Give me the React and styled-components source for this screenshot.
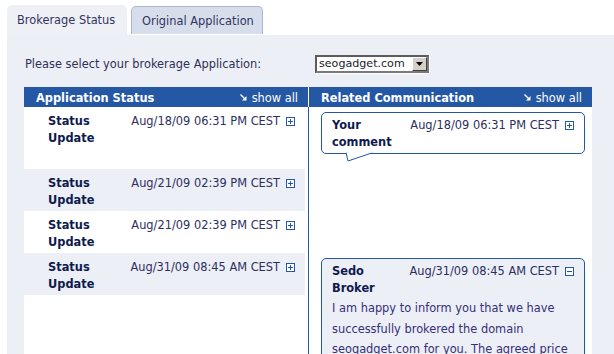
import React from "react";
import styled, { createGlobalStyle } from "styled-components";

const Global = createGlobalStyle`
  html, body { margin: 0; padding: 0; background: #ffffff; }
  body { font-family: "DejaVu Sans", Verdana, sans-serif; font-size: 11.4px; color: #2b2b5b; }
`;

const Page = styled.div`
  width: 614px;
  height: 354px;
  overflow: hidden;
  padding-top: 5px;
  box-sizing: border-box;
  white-space: nowrap;
`;

const Tabs = styled.div`
  display: flex;
  align-items: flex-end;
  gap: 4px;
  padding-left: 7px;
  height: 30px;
`;

const Tab = styled.div`
  box-sizing: border-box;
  display: flex;
  align-items: center;
  height: ${(p) => (p.$active ? "30px" : "28px")};
  margin-bottom: ${(p) => (p.$active ? "0" : "1px")};
  padding: 0 10px;
  width: ${(p) => p.$w}px;
  border-radius: 5px 5px 0 0;
  background: ${(p) => (p.$active ? "#eef0f5" : "#d6deec")};
  border: ${(p) => (p.$active ? "none" : "1px solid #a9b7d3")};
  border-bottom: none;
  color: #33335f;
`;

const Panel = styled.div`
  margin-left: 7px;
  background: #eceff5;
  height: 324px;
  padding: 20px 0 0 17px;
  box-sizing: border-box;
`;

const FormRow = styled.div`
  display: flex;
  align-items: center;
  height: 18px;
`;

const Label = styled.span`
  width: 290px;
  margin-left: 1px;
  color: #303058;
`;

const Select = styled.div`
  box-sizing: border-box;
  width: 114px;
  height: 18px;
  display: flex;
  align-items: center;
  background: #fff;
  border: 2px solid #5c5c5c;
  border-right-color: #7a7a7a;
  border-bottom-color: #7a7a7a;
  box-shadow: 1px 1px 0 #ffffff;
`;

const SelectText = styled.span`
  flex: 1;
  padding-left: 2px;
  font-size: 11.1px;
  color: #1a1a2a;
  line-height: 14px;
`;

const SelectButton = styled.span`
  box-sizing: border-box;
  width: 15px;
  height: 14px;
  background: #d4d0c8;
  border: 1px solid;
  border-color: #ffffff #404040 #404040 #ffffff;
  display: flex;
  align-items: center;
  justify-content: center;
`;

const Columns = styled.div`
  margin-top: 14px;
  width: 568px;
`;

const HeaderRow = styled.div`
  display: flex;
  height: 20px;
`;

const Header = styled.div`
  box-sizing: border-box;
  width: ${(p) => p.$w}px;
  background: #2457a4;
  border-right: ${(p) => (p.$gap ? "1px solid #ffffff" : "none")};
  display: flex;
  align-items: center;
  justify-content: space-between;
  padding: 1px 10px 0 12px;
  color: #ffffff;
`;

const HeaderTitle = styled.span`
  font-weight: bold;
`;

const ShowAll = styled.span`
  display: flex;
  align-items: center;
  gap: 5px;
`;

const Row = styled.div`
  display: flex;
`;

const LeftCell = styled.div`
  box-sizing: border-box;
  width: 285px;
  background: #ffffff;
  border-right: 1px solid #2457a4;
  padding-right: 3px;
`;

const RightCell = styled.div`
  flex: 1;
  background: #ffffff;
  padding: 5px 6px 0 12px;
`;

const Entry = styled.div`
  display: flex;
  align-items: flex-start;
  background: ${(p) => (p.$alt ? "#eceff5" : "#ffffff")};
  padding: 6px 10px 2px 24px;
  box-sizing: border-box;
  line-height: 17px;
`;

const Title = styled.div`
  width: ${(p) => p.$w || 60}px;
  font-weight: bold;
  color: #0f1a4e;
  white-space: normal;
`;

const Stamp = styled.div`
  flex: 1;
  display: flex;
  justify-content: flex-end;
  align-items: center;
  gap: 6px;
  color: #2e2e60;
  height: 17px;
`;

const Bubble = styled.div`
  position: relative;
  box-sizing: border-box;
  width: 264px;
  border: 1px solid #2457a4;
  border-radius: 5px;
  background: ${(p) => (p.$alt ? "#eceff5" : "#ffffff")};
  padding: 4px 10px 2px 10px;
  margin-bottom: ${(p) => p.$mb || 0}px;
  line-height: 17px;
`;

const BubbleHead = styled.div`
  display: flex;
  align-items: flex-start;
`;

const Tail = styled.svg`
  position: absolute;
  left: 24px;
  bottom: -9px;
`;

const Body = styled.div`
  line-height: 20.5px;
  color: #36307a;
  margin-top: 1px;
  white-space: normal;
`;

const Arrow = () => (
  <svg width="7" height="7" viewBox="0 0 7 7">
    <path d="M0.5 0.5 L5.5 5.5" stroke="#fff" strokeWidth="1.4" />
    <path d="M6.5 2 L6.5 6.5 L2 6.5 Z" fill="#fff" />
  </svg>
);

const Toggle = ({ open }) => (
  <svg width="9" height="9" viewBox="0 0 9 9" style={{ flex: "none" }}>
    <rect x="0.5" y="0.5" width="8" height="8" fill="#fff" stroke="#2457a4" />
    <path d="M2 4.5 H7" stroke="#2457a4" />
    {!open && <path d="M4.5 2 V7" stroke="#2457a4" />}
  </svg>
);

const statuses = [
  { date: "Aug/18/09 06:31 PM CEST", alt: false },
  { date: "Aug/21/09 02:39 PM CEST", alt: true },
  { date: "Aug/21/09 02:39 PM CEST", alt: false },
  { date: "Aug/31/09 08:45 AM CEST", alt: true },
];

const StatusEntry = ({ s }) => (
  <Entry $alt={s.alt}>
    <Title $w={70}>Status Update</Title>
    <Stamp>
      <span>{s.date}</span>
      <Toggle />
    </Stamp>
  </Entry>
);

export default function App() {
  return (
    <Page>
      <Global />
      <Tabs>
        <Tab $active $w={120}>Brokerage Status</Tab>
        <Tab $w={132}>Original Application</Tab>
      </Tabs>
      <Panel>
        <FormRow>
          <Label>Please select your brokerage Application:</Label>
          <Select>
            <SelectText>seogadget.com</SelectText>
            <SelectButton>
              <svg width="7" height="4" viewBox="0 0 7 4">
                <path d="M0 0 H7 L3.5 4 Z" fill="#000" />
              </svg>
            </SelectButton>
          </Select>
        </FormRow>
        <Columns>
          <HeaderRow>
            <Header $w={285} $gap>
              <HeaderTitle>Application Status</HeaderTitle>
              <ShowAll><Arrow />show all</ShowAll>
            </Header>
            <Header $w={283}>
              <HeaderTitle>Related Communication</HeaderTitle>
              <ShowAll><Arrow />show all</ShowAll>
            </Header>
          </HeaderRow>
          <Row>
            <LeftCell><StatusEntry s={statuses[0]} /></LeftCell>
            <RightCell>
              <Bubble $mb={15}>
                <BubbleHead>
                  <Title $w={74}>Your comment</Title>
                  <Stamp>
                    <span>Aug/18/09 06:31 PM CEST</span>
                    <Toggle />
                  </Stamp>
                </BubbleHead>
                <Tail width="28" height="10" viewBox="0 0 28 10">
                  <path d="M0 0.5 L2 9 L27 0.5" fill="#fff" stroke="#2457a4" strokeWidth="1" />
                  <path d="M1 0 H27" stroke="#fff" strokeWidth="1.5" />
                </Tail>
              </Bubble>
            </RightCell>
          </Row>
          <Row>
            <LeftCell><StatusEntry s={statuses[1]} /></LeftCell>
            <RightCell />
          </Row>
          <Row>
            <LeftCell><StatusEntry s={statuses[2]} /></LeftCell>
            <RightCell />
          </Row>
          <Row>
            <LeftCell><StatusEntry s={statuses[3]} /></LeftCell>
            <RightCell>
              <Bubble $alt>
                <BubbleHead>
                  <Title $w={74}>Sedo Broker</Title>
                  <Stamp>
                    <span>Aug/31/09 08:45 AM CEST</span>
                    <Toggle open />
                  </Stamp>
                </BubbleHead>
                <Body>
                  I am happy to inform you that we have successfully brokered the domain seogadget.com for you. The agreed price is
                </Body>
              </Bubble>
            </RightCell>
          </Row>
        </Columns>
      </Panel>
    </Page>
  );
}
